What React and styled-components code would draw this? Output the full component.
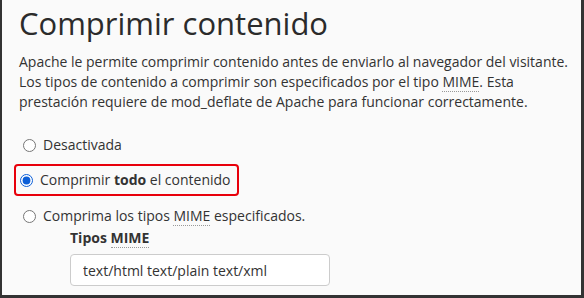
import React from "react";
import styled, { createGlobalStyle } from "styled-components";

const GlobalStyle = createGlobalStyle`
  html, body {
    margin: 0;
    padding: 0;
    background: #fafafa;
  }
  body {
    font-family: "Open Sans", "Noto Sans", sans-serif;
    color: #333;
  }
`;

const Frame = styled.div`
  box-sizing: border-box;
  width: 584px;
  height: 298px;
  border-left: 2px solid #333;
  border-right: 3px solid #333;
  border-bottom: 3px solid #333;
  padding: 0 0 0 17px;
  overflow: hidden;
  background: #fafafa;
`;

const Title = styled.h1`
  margin: 0;
  padding-top: 2px;
  font-size: 31px;
  font-weight: 400;
  line-height: 42px;
  color: #2b2b2b;
`;

const Description = styled.p`
  margin: 8px 0 0;
  font-size: 14px;
  line-height: 20px;
  color: #333;
`;

const Abbr = styled.abbr`
  text-decoration: none;
  border-bottom: 1px dotted #999;
`;

const Options = styled.div`
  display: flex;
  flex-direction: column;
  margin-top: 23px;
`;

const Option = styled.label`
  display: inline-flex;
  align-items: center;
  gap: 7px;
  font-size: 14px;
  line-height: 20px;
  padding: ${(p) => (p.$highlight ? "4px 6px 4px 4px" : "0 0 0 4px")};
  margin: ${(p) => (p.$highlight ? "9px 0 10px -5px" : "0")};
  border: ${(p) => (p.$highlight ? "2.5px solid #e8000b" : "none")};
  border-radius: 4px;
  align-self: flex-start;

  input {
    margin: 0;
    width: 13px;
    height: 13px;
    accent-color: #0b5ed7;
  }
`;

const Field = styled.div`
  display: flex;
  flex-direction: column;
  margin: 2px 0 0 51px;
`;

const FieldLabel = styled.span`
  font-size: 14px;
  font-weight: 700;
  line-height: 20px;
  color: #333;
`;

const TextInput = styled.input`
  box-sizing: border-box;
  margin-top: 6px;
  width: 260px;
  height: 32px;
  padding: 0 12px;
  border: 1px solid #ccc;
  border-radius: 4px;
  background: #fff;
  font-family: "Open Sans", sans-serif;
  font-size: 14px;
  color: #333;
`;

export default function App() {
  return (
    <>
      <GlobalStyle />
      <Frame>
        <Title>Comprimir contenido</Title>
        <Description>
          Apache le permite comprimir contenido antes de enviarlo al navegador
          del visitante. Los tipos de contenido a comprimir son especificados
          por el tipo <Abbr title="Multipurpose Internet Mail Extensions">MIME</Abbr>. Esta
          prestación requiere de mod_deflate de Apache para funcionar
          correctamente.
        </Description>
        <Options>
          <Option>
            <input type="radio" name="deflate" />
            Desactivada
          </Option>
          <Option $highlight>
            <input type="radio" name="deflate" defaultChecked />
            <span>
              Comprimir <b>todo</b> el contenido
            </span>
          </Option>
          <Option>
            <input type="radio" name="deflate" />
            <span>
              Comprima los tipos <Abbr>MIME</Abbr> especificados.
            </span>
          </Option>
        </Options>
        <Field>
          <FieldLabel>
            Tipos <Abbr>MIME</Abbr>
          </FieldLabel>
          <TextInput defaultValue="text/html text/plain text/xml" />
        </Field>
      </Frame>
    </>
  );
}
